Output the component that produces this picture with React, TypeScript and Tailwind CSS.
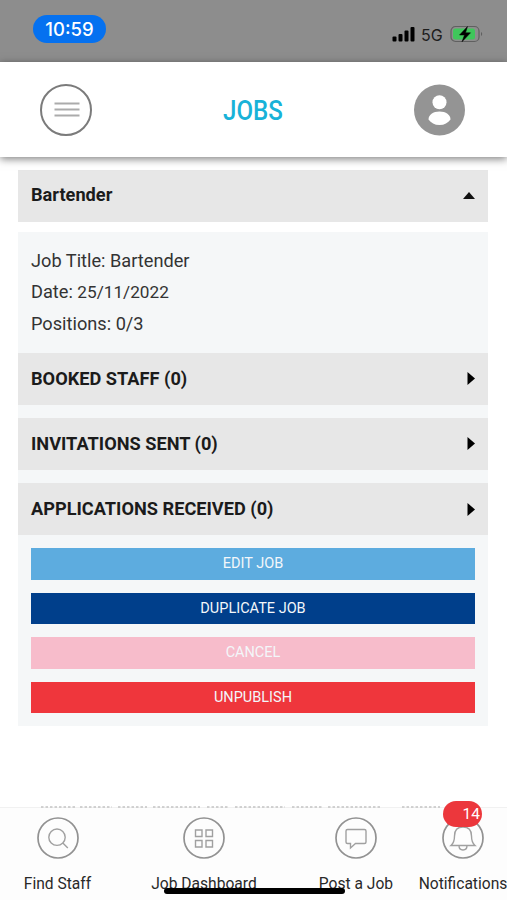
import React from "react";

const sections = ["BOOKED STAFF (0)", "INVITATIONS SENT (0)", "APPLICATIONS RECEIVED (0)"];

const actions = [
    { label: "EDIT JOB", color: "bg-[#5dacdf]" },
    { label: "DUPLICATE JOB", color: "bg-[#003f8b]" },
    { label: "CANCEL", color: "bg-[#f7bccb]" },
    { label: "UNPUBLISH", color: "bg-[#ef363c]" },
];

function StatusBar() {
    return (
        <div className="h-[62px] bg-[#8d8d8d] flex items-start justify-between pl-[33px] pr-[23px] shrink-0">
            <div className="mt-[15px] w-[73px] h-7 rounded-full bg-[#0571f0] text-white font-[Inter] font-medium text-[18.5px] leading-7 text-center">
                10:59
            </div>
            <div className="mt-[23px] flex items-center h-[21px]">
                <svg width="24" height="16" viewBox="0 0 24 16" fill="#000">
                    <rect x="0.5" y="10.5" width="4" height="5" rx="1" />
                    <rect x="6.5" y="8" width="4" height="7.5" rx="1" />
                    <rect x="12.5" y="4.5" width="4" height="11" rx="1" />
                    <rect x="18.5" y="1" width="4" height="14.5" rx="1" />
                </svg>
                <span className="ml-[5px] mt-0.5 w-[23px] font-[Inter] text-[16px] leading-5 whitespace-nowrap text-[#1d1d1d]">5G</span>
                <svg className="ml-1.5" width="34" height="18" viewBox="0 0 34 18">
                    <rect x="1" y="1.5" width="28" height="15" rx="4.5" fill="none" stroke="#606060" strokeWidth="1.2" />
                    <rect x="3" y="3.5" width="22" height="11" rx="2.5" fill="#3fc75b" />
                    <path d="M31 7v4c1.6-.6 1.6-3.4 0-4z" fill="#606060" />
                    <path d="M17.5 1.5 9.5 10h5L12 16.8 20.5 7.8h-5z" fill="#000" stroke="#000" strokeWidth=".5" />
                </svg>
            </div>
        </div>
    );
}

function Header() {
    return (
        <header className="relative z-10 h-[95px] bg-white flex items-center justify-between pl-10 pr-[42px] shrink-0 shadow-[0_2px_8px_rgba(0,0,0,0.5)]">
            <svg width="52" height="52" viewBox="0 0 52 52" fill="none">
                <circle cx="26" cy="26" r="25" stroke="#7b7b7b" strokeWidth="2" />
                <path d="M14.500 19.500h25M14.500 25.500h25M14.500 31.500h25" stroke="#ababab" strokeWidth="1.8" />
            </svg>
            <h1 className="mt-0.5 w-[70px] text-center text-[28px] leading-8 font-medium text-[#18b2d8] scale-x-[0.86]">JOBS</h1>
            <svg width="51" height="52" viewBox="0 0 51 52">
                <circle cx="25.5" cy="26" r="25.5" fill="#949494" />
                <circle cx="25.5" cy="18.2" r="7" fill="#fff" />
                <path d="M14.5 35.500c0-4.500 4.500-8 11-8s11 3.500 11 8c-2.500 3.500-6 5.500-11 5.500s-8.500-2-11-5.500z" fill="#fff" />
            </svg>
        </header>
    );
}

function JobPanel() {
    return (
        <main className="h-[650px] pl-[18px] pr-[19px] pt-[13px] text-[18.2px] text-[#333]">
            <div className="h-[52px] bg-[#e7e7e7] flex items-center justify-between px-[13px] pb-0.5 font-bold text-[#1b1b1b]">
                <span>Bartender</span>
                <svg width="12" height="7" viewBox="0 0 12 7"><path d="M6 0 12 7H0z" fill="#111" /></svg>
            </div>

            <div className="mt-2.5 h-[494px] bg-[#f5f7f8]">
                <div className="h-[120.5px] pl-[13px] pt-[12.5px] leading-[31.2px]">
                    <p>Job Title: Bartender</p>
                    <p>Date: <span className="text-[17.2px]">25/11/2022</span></p>
                    <p>Positions: 0/3</p>
                </div>
                <div className="flex flex-col gap-[13px]">
                    {sections.map((title) => (
                        <div key={title} className="h-[52.3px] bg-[#e7e7e7] flex items-center justify-between px-[13px] font-bold text-[#1b1b1b]">
                            <span className="pb-px">{title}</span>
                            <svg width="8" height="13" viewBox="0 0 8 13"><path d="M0.5 0 8 6.500 0.5 13z" fill="#000" /></svg>
                        </div>
                    ))}
                </div>
                <div className="mt-[13px] px-[13px] flex flex-col gap-[13px]">
                    {actions.map((action) => (
                        <button key={action.label} className={`h-[31.5px] w-full text-[14.5px] leading-[30px] text-[#f3f7fa] ${action.color}`}>
                            {action.label}
                        </button>
                    ))}
                </div>
            </div>
        </main>
    );
}

function NavIcon({ children }: { children: React.ReactNode }) {
    return (
        <svg width="42" height="42" viewBox="0 0 42 42" fill="none" stroke="#a0a0a0" strokeWidth="1.4">
            <circle cx="21" cy="21" r="20" stroke="#929292" strokeWidth="1.7" />
            {children}
        </svg>
    );
}

function NavItem({ label, className, children }: { label: string; className: string; children: React.ReactNode }) {
    return (
        <div className={`relative flex flex-col items-center shrink-0 ${className}`}>
            <NavIcon>{children}</NavIcon>
            <span className="mt-[15px] text-[15.6px] leading-5 whitespace-nowrap text-[#292929]">{label}</span>
        </div>
    );
}

function BottomNav() {
    return (
        <nav className="relative h-[93px] bg-[#fdfdfd] border-t border-[#f1f1f1] flex pt-[9px]">
            {/* content scrolling under the bar */}
            <svg className="absolute left-10 -top-[2px]" width="405" height="2" viewBox="0 0 405 2">
                <path
                    d="M1 1h36M40 1h32M78 1h29M113 1h47M167 1h21M195 1h50M252 1h31M288 1h52M362 1h38"
                    stroke="#c4c4c4" strokeWidth="1.5" strokeDasharray="2.500 2"
                />
            </svg>
            <NavItem label="Find Staff" className="w-[115px]">
                <circle cx="20" cy="20.2" r="8.2" />
                <path d="m25.8 26 5 5" />
            </NavItem>
            <NavItem label="Job Dashboard" className="w-[178px]">
                <path d="M12.500 13h6.500v6.500h-6.500zM23 13h6.500v6.500H23zM12.500 23.500h6.500v6.500h-6.500zM23 23.500h6.500v6.500H23z" />
            </NavItem>
            <NavItem label="Post a Job" className="w-[126px]">
                <path d="M12.500 12.500h17c1 0 1.500.5 1.500 1.500v11c0 1-.5 1.500-1.500 1.500h-9L15.500 31v-4.500h-3c-1 0-1.500-.5-1.500-1.500V14c0-1 .5-1.500 1.500-1.500z" />
            </NavItem>
            <NavItem label="Notifications" className="w-[88px]">
                <path d="M9 28.500c3-2.500 3.500-4.500 3.500-9.500 0-6 3.500-9 8.500-9s8.500 3 8.500 9c0 5 .5 7 3.500 9.500zM17 28.500c0 3 1.500 4.500 4 4.500s4-1.500 4-4.500" />
            </NavItem>
            <div className="absolute left-[443px] -top-[7px] w-[39px] h-[26px] rounded-full bg-[#ec373c] text-white text-[15.5px] leading-[26px] text-right pr-0.5">
                14
            </div>
            <div className="absolute left-[164px] top-[80px] w-[181px] h-[6px] rounded-full bg-black" />
        </nav>
    );
}

export default function App() {
    return (
        <div className="w-[507px] h-[900px] overflow-hidden bg-white flex flex-col font-[Roboto,sans-serif]">
            <StatusBar />
            <Header />
            <JobPanel />
            <BottomNav />
        </div>
    );
}
